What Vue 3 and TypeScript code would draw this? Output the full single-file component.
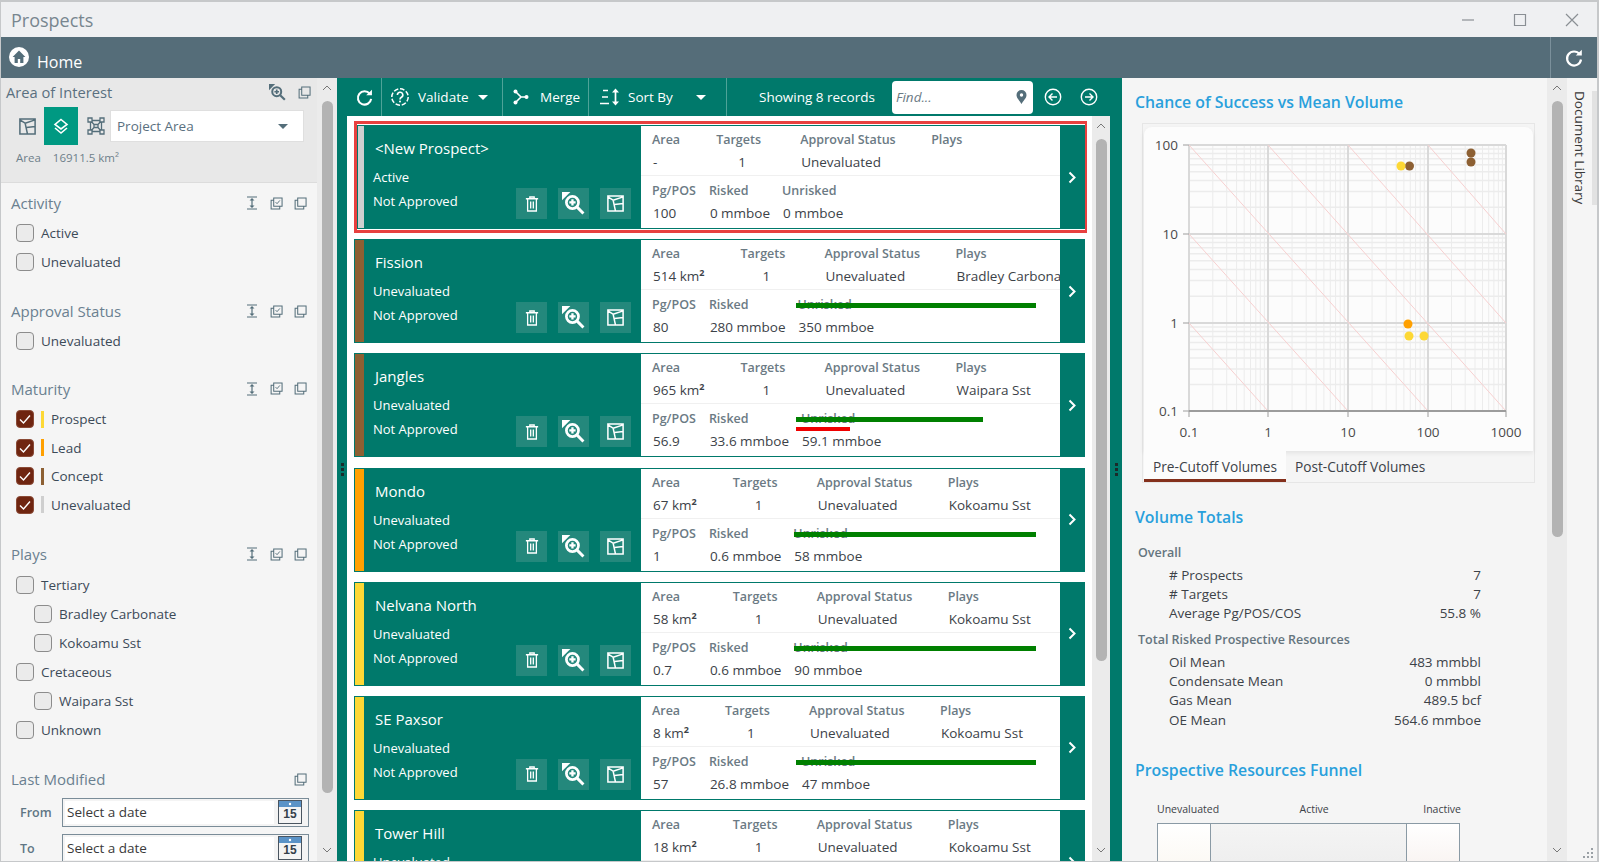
<template>
  <div class="window">
    <svg class="defs" width="0" height="0">
      <symbol id="i-refresh" viewBox="0 0 20 20">
        <path d="M15.6 6.2A7 7 0 1 0 17 11.5" fill="none" stroke="currentColor" stroke-width="2.2" />
        <path d="M11.8 7.6h6V1.8z" fill="currentColor" />
      </symbol>
      <symbol id="i-map" viewBox="0 0 20 20">
        <path d="M2 2h16v16H2zM2 3l5.5 3.5L10 18M7.5 6.5 18 3M9 11l9-1" fill="none" stroke="currentColor" stroke-width="1.6" />
      </symbol>
      <symbol id="i-zoom" viewBox="0 0 22 22">
        <path d="M0 0h8L0 8z" fill="currentColor" />
        <circle cx="10" cy="10" r="5.8" fill="none" stroke="currentColor" stroke-width="2.6" />
        <path d="M7 10h6M10 7v6" stroke="currentColor" stroke-width="2.2" />
        <path d="m14.5 14.5 6 6" stroke="currentColor" stroke-width="2.8" />
      </symbol>
      <symbol id="i-trash" viewBox="0 0 16 18">
        <path d="M1 3h14M5.5 3V1h5v2M3 3v14h10V3M6.5 6v8M9.5 6v8" fill="none" stroke="currentColor" stroke-width="1.5" />
      </symbol>
      <symbol id="i-copy" viewBox="0 0 14 14">
        <path d="M4 1h9v9H4zM4 3.5H1.2v9.3h9.3V10" fill="none" stroke="currentColor" stroke-width="1.1" />
      </symbol>
      <symbol id="i-copycheck" viewBox="0 0 14 14">
        <path d="M4 1h9v9H4zM4 3.5H1.2v9.3h9.3V10" fill="none" stroke="currentColor" stroke-width="1.1" />
        <path d="m6 5.5 1.6 1.7 3-3.5" fill="none" stroke="currentColor" stroke-width="1" />
      </symbol>
      <symbol id="i-expand" viewBox="0 0 12 14">
        <path d="M1 1h10M1 13h10" stroke="currentColor" stroke-width="1.2" />
        <path d="M6 3v8" stroke="currentColor" stroke-width="1.2" />
        <path d="m3.5 4.5 2.5-2.5 2.5 2.5zM3.5 9.5 6 12l2.5-2.5z" fill="currentColor" />
      </symbol>
      <symbol id="i-cal" viewBox="0 0 24 24">
        <rect x="0.5" y="0.5" width="23" height="23" fill="#f4f4f4" stroke="#4a5560" />
        <rect x="1" y="1" width="22" height="6" fill="#5b93c7" />
        <circle cx="12" cy="4" r="1.2" fill="#fff" />
      </symbol>
    </svg>

    <div class="titlebar">
      <span class="title">Prospects</span>
      <div class="win-controls">
        <svg width="14" height="14" viewBox="0 0 14 14"><path d="M1 7h12" stroke="#8a8f94" stroke-width="1.2" /></svg>
        <svg width="14" height="14" viewBox="0 0 14 14"><path d="M1.5 1.5h11v11h-11z" fill="none" stroke="#8a8f94" stroke-width="1.2" /></svg>
        <svg width="14" height="14" viewBox="0 0 14 14"><path d="m1 1 12 12M13 1 1 13" stroke="#8a8f94" stroke-width="1.2" /></svg>
      </div>
    </div>

    <div class="homebar">
      <svg class="home-icon" width="20" height="20" viewBox="0 0 20 20">
        <circle cx="10" cy="10" r="10" fill="#fff" />
        <path d="M10 3.6 3.6 10h2v6h3.2v-4h2.4v4h3.2v-6h2z" fill="#546e7a" />
      </svg>
      <span class="home-label">Home</span>
      <div class="home-refresh">
        <svg width="20" height="20"><use href="#i-refresh" /></svg>
      </div>
    </div>

    <div class="body">
      <aside class="filters">
        <div class="filters-main">
          <div class="aoi">
            <div class="aoi-head">
              <span>Area of Interest</span>
              <svg class="aoi-zoom" width="17" height="17"><use href="#i-zoom" /></svg>
              <svg class="aoi-copy" width="13" height="13"><use href="#i-copy" /></svg>
            </div>
            <div class="aoi-row">
              <span class="aoi-btn"><svg width="19" height="19"><use href="#i-map" /></svg></span>
              <span class="aoi-btn active">
                <svg width="18" height="18" viewBox="0 0 18 18">
                  <path d="M9 2.5 15 7.5 9 12 3 7.5z" fill="none" stroke="#fff" stroke-width="1.6" />
                  <path d="M3 11 9 16l6-5" fill="none" stroke="#fff" stroke-width="1.6" />
                </svg>
              </span>
              <span class="aoi-btn">
                <svg width="18" height="18" viewBox="0 0 18 18">
                  <path d="M3.5 3.5h11v11h-11zM3.5 3.5l3.5 4M14.5 3.5 11 7.5M3.5 14.5 7 10.5M14.5 14.5 11 10.5M7 7.5h4v3H7z" fill="none" stroke="currentColor" stroke-width="1.3" />
                  <path d="M1 1h4v4H1zM13 1h4v4h-4zM1 13h4v4H1zM13 13h4v4h-4z" fill="#e8e8e8" stroke="currentColor" stroke-width="1.3" />
                </svg>
              </span>
              <div class="aoi-select">
                <span>Project Area</span>
                <i class="caret dark"></i>
              </div>
            </div>
            <div class="aoi-area"><span>Area</span><span>16911.5 km²</span></div>
          </div>

          <section v-for="group in filterGroups" :key="group.title" class="filter-group">
            <div class="group-head">
              <span>{{ group.title }}</span>
              <div class="group-icons">
                <svg width="12" height="14"><use href="#i-expand" /></svg>
                <svg width="13" height="13"><use href="#i-copycheck" /></svg>
                <svg width="13" height="13"><use href="#i-copy" /></svg>
              </div>
            </div>
            <label v-for="item in group.items" :key="item.label" class="check" :class="{ indent: item.indent }">
              <span class="box" :class="{ checked: item.checked }">
                <svg v-if="item.checked" width="14" height="14" viewBox="0 0 14 14"><path d="m2 7.5 3.5 3.5L12 3.5" fill="none" stroke="#fff" stroke-width="1.4" /></svg>
              </span>
              <span v-if="item.color" class="swatch" :style="{ background: item.color }"></span>
              <span>{{ item.label }}</span>
            </label>
          </section>

          <section class="filter-group">
            <div class="group-head">
              <span>Last Modified</span>
              <div class="group-icons">
                <svg width="13" height="13"><use href="#i-copy" /></svg>
              </div>
            </div>
            <div v-for="d in ['From', 'To']" :key="d" class="date-row">
              <span class="date-label">{{ d }}</span>
              <div class="date-input">
                <span class="date-text">Select a date</span>
                <span class="cal">
                  <svg width="24" height="24"><use href="#i-cal" /></svg>
                  <span class="cal-day">15</span>
                </span>
              </div>
            </div>
          </section>
        </div>
        <div class="scrollbar">
          <svg class="arrow" width="10" height="6" viewBox="0 0 10 6"><path d="m1 5 4-4 4 4" fill="none" stroke="#777" /></svg>
          <div class="thumb thumb-left"></div>
          <div class="spring"></div>
          <svg class="arrow" width="10" height="6" viewBox="0 0 10 6"><path d="m1 1 4 4 4-4" fill="none" stroke="#777" /></svg>
        </div>
      </aside>

      <div class="center">
        <div class="splitter"><i></i><i></i><i></i></div>
        <div class="center-main">
          <div class="toolbar">
            <div class="tb tb-refresh"><svg width="19" height="19"><use href="#i-refresh" /></svg></div>
            <div class="tb tb-validate">
              <svg width="20" height="20" viewBox="0 0 20 20">
                <circle cx="10" cy="10" r="8.2" fill="none" stroke="#fff" stroke-width="1.5" stroke-dasharray="4.6 1.8" />
                <path d="M7.4 8a2.7 2.7 0 1 1 4 2.3c-1 .6-1.4 1-1.4 2.1" fill="none" stroke="#fff" stroke-width="1.6" />
                <circle cx="10" cy="14.6" r="1" fill="#fff" />
              </svg>
              <span>Validate</span>
              <i class="caret"></i>
            </div>
            <div class="tb tb-merge">
              <svg width="16" height="16" viewBox="0 0 16 16">
                <path d="M2.5 2.5 8 8l-5.5 5.5M8 8h5" fill="none" stroke="#fff" stroke-width="1.6" />
                <circle cx="2.5" cy="2.5" r="2" fill="#fff" /><circle cx="2.5" cy="13.5" r="2" fill="#fff" /><circle cx="13.5" cy="8" r="2" fill="#fff" />
              </svg>
              <span>Merge</span>
            </div>
            <div class="tb tb-sort">
              <svg width="21" height="18" viewBox="0 0 21 18">
                <path d="M4 2.5h5M3 9h6M1 15.5h9" stroke="#fff" stroke-width="1.7" />
                <path d="M16.5 3v12" stroke="#fff" stroke-width="1.7" />
                <path d="m13 4.5 3.5-4 3.5 4zM13 13.5l3.5 4 3.5-4z" fill="#fff" />
              </svg>
              <span>Sort By</span>
              <i class="caret"></i>
            </div>
            <div class="tb-right">
              <span class="records">Showing 8 records</span>
              <div class="find">
                <span>Find...</span>
                <svg width="11" height="14" viewBox="0 0 11 14"><path d="M5.5 0a5 5 0 0 1 5 5c0 3.3-3.5 6-5 9-1.5-3-5-5.7-5-9a5 5 0 0 1 5-5z" fill="#546e7a" /><circle cx="5.5" cy="5" r="1.7" fill="#fff" /></svg>
              </div>
              <svg class="nav-btn" width="18" height="18" viewBox="0 0 18 18"><circle cx="9" cy="9" r="7.7" fill="none" stroke="#fff" stroke-width="1.4" /><path d="M13 9H5.5M8.5 5.5 5 9l3.5 3.5" fill="none" stroke="#fff" stroke-width="1.4" /></svg>
              <svg class="nav-btn" width="18" height="18" viewBox="0 0 18 18"><circle cx="9" cy="9" r="7.7" fill="none" stroke="#fff" stroke-width="1.4" /><path d="M5 9h7.5M9.5 5.5 13 9l-3.5 3.5" fill="none" stroke="#fff" stroke-width="1.4" /></svg>
            </div>
          </div>

          <div class="list-wrap">
            <div class="list">
              <div v-for="p in prospects" :key="p.name" class="card-slot" :class="{ selected: p.selected }">
                <article class="card">
                  <div class="strip" :style="{ background: p.color }"></div>
                  <div class="card-left">
                    <div class="card-text">
                      <div class="card-name">{{ p.name }}</div>
                      <div class="card-status">{{ p.activity }}</div>
                      <div class="card-status">Not Approved</div>
                    </div>
                    <div class="card-actions">
                      <span class="act"><svg width="14" height="16"><use href="#i-trash" /></svg></span>
                      <span class="act"><svg width="23" height="23"><use href="#i-zoom" /></svg></span>
                      <span class="act"><svg width="19" height="19"><use href="#i-map" /></svg></span>
                    </div>
                  </div>
                  <div class="card-body">
                    <div class="card-row top">
                      <div class="col col-area"><b>Area</b><span>{{ p.area }}<sup v-if="p.area !== '-'">2</sup></span></div>
                      <div class="col col-targets"><b>Targets</b><span>1</span></div>
                      <div class="col col-approval"><b>Approval Status</b><span>Unevaluated</span></div>
                      <div class="col col-plays"><b>Plays</b><span>{{ p.plays }}</span></div>
                    </div>
                    <div class="card-row bottom">
                      <div class="col col-pg"><b>Pg/POS</b><span>{{ p.pg }}</span></div>
                      <div class="col col-risked"><b>Risked</b><span>{{ p.risked }}</span></div>
                      <div class="col"><b>Unrisked</b><span>{{ p.unrisked }}</span></div>
                      <i v-if="p.green" class="bar green" :style="{ left: p.barLeft + 'px', width: p.green + 'px' }"></i>
                      <i v-if="p.red" class="bar red" :style="{ left: p.barLeft + 'px', width: p.red + 'px' }"></i>
                    </div>
                  </div>
                  <div class="card-chevron">
                    <svg width="9" height="13" viewBox="0 0 9 13"><path d="m1.5 1.5 5 5-5 5" fill="none" stroke="#fff" stroke-width="2" /></svg>
                  </div>
                </article>
              </div>
            </div>
            <div class="scrollbar list-scroll">
              <svg class="arrow" width="10" height="6" viewBox="0 0 10 6"><path d="m1 5 4-4 4 4" fill="none" stroke="#777" /></svg>
              <div class="thumb thumb-list"></div>
              <div class="spring"></div>
              <svg class="arrow" width="10" height="6" viewBox="0 0 10 6"><path d="m1 1 4 4 4-4" fill="none" stroke="#777" /></svg>
            </div>
          </div>
        </div>
        <div class="splitter right"><i></i><i></i><i></i></div>
      </div>

      <div class="summary">
        <div class="summary-main">
          <h2 class="chart-title">Chance of Success vs Mean Volume</h2>
          <div class="chart-box">
            <div class="chart-card">
              <svg width="388" height="324" viewBox="0 0 388 324">
                <line v-for="x in minorX" :key="'mx' + x" :x1="x" :x2="x" y1="18" y2="284" stroke="#ececec" />
                <line v-for="y in minorY" :key="'my' + y" x1="45" x2="362" :y1="y" :y2="y" stroke="#ececec" stroke-width="1.5" />
                <line v-for="x in decadeX" :key="'dx' + x" :x1="x" :x2="x" y1="18" y2="284" stroke="#d9d9d9" stroke-width="2" />
                <line v-for="y in decadeY" :key="'dy' + y" x1="45" x2="362" :y1="y" :y2="y" stroke="#d9d9d9" stroke-width="2" />
                <line v-for="(d, i) in diagonals" :key="'d' + i" :x1="d[0]" :y1="d[1]" :x2="d[2]" :y2="d[3]" stroke="#f7d0d0" />
                <line x1="45" x2="362" y1="284" y2="284" stroke="#9c9c9c" stroke-width="2" />
                <line v-for="x in decadeX" :key="'tx' + x" :x1="x" :x2="x" y1="284" y2="290" stroke="#9c9c9c" />
                <line v-for="y in decadeY" :key="'ty' + y" x1="39" x2="45" :y1="y" :y2="y" stroke="#9c9c9c" />
                <text v-for="(t, i) in xLabels" :key="'xl' + t" class="axis" text-anchor="middle" :x="decadeX[i]" y="310">{{ t }}</text>
                <text v-for="(t, i) in yLabels" :key="'yl' + t" class="axis" text-anchor="end" x="34" :y="decadeY[i] + 5">{{ t }}</text>
                <circle v-for="(c, i) in dots" :key="'c' + i" :cx="c.x" :cy="c.y" r="4.5" :fill="c.fill" />
              </svg>
            </div>
            <div class="tabs">
              <span class="tab active">Pre-Cutoff Volumes</span>
              <span class="tab">Post-Cutoff Volumes</span>
            </div>
          </div>

          <h2 class="vol-title">Volume Totals</h2>
          <div class="totals">
            <template v-for="block in totals" :key="block.title">
              <div class="totals-head">{{ block.title }}</div>
              <div v-for="r in block.rows" :key="r[0]" class="totals-row"><span>{{ r[0] }}</span><span>{{ r[1] }}</span></div>
            </template>
          </div>

          <h2 class="funnel-title">Prospective Resources Funnel</h2>
          <div class="funnel">
            <div class="funnel-labels"><span>Unevaluated</span><span>Active</span><span>Inactive</span></div>
            <div class="funnel-boxes"><i class="fb fb1"></i><i class="fb fb2"></i><i class="fb fb3"></i></div>
          </div>
        </div>
        <div class="scrollbar">
          <svg class="arrow" width="10" height="6" viewBox="0 0 10 6"><path d="m1 5 4-4 4 4" fill="none" stroke="#777" /></svg>
          <div class="thumb thumb-right"></div>
          <div class="spring"></div>
          <svg class="arrow" width="10" height="6" viewBox="0 0 10 6"><path d="m1 1 4 4 4-4" fill="none" stroke="#777" /></svg>
        </div>
      </div>

      <div class="doc-strip">
        <span class="doc-tab">Document Library</span>
        <svg class="grip" width="11" height="11" viewBox="0 0 11 11" fill="#9aa0a5">
          <rect x="8" y="0" width="2" height="2" /><rect x="4" y="4" width="2" height="2" /><rect x="8" y="4" width="2" height="2" /><rect x="0" y="8" width="2" height="2" /><rect x="4" y="8" width="2" height="2" /><rect x="8" y="8" width="2" height="2" />
        </svg>
      </div>
    </div>
  </div>
</template>

<script setup lang="ts">
interface FilterItem {
  label: string
  checked?: boolean
  indent?: boolean
  color?: string
}

interface FilterGroup {
  title: string
  items: FilterItem[]
}

interface Prospect {
  name: string
  color: string
  activity: string
  area: string
  plays: string
  pg: string
  risked: string
  unrisked: string
  barLeft?: number
  green?: number
  red?: number
  selected?: boolean
}

const YELLOW = '#fdd835'
const ORANGE = '#ffa000'
const BROWN = '#8d6033'
const GREY = '#cfcfcf'

const filterGroups: FilterGroup[] = [
  { title: 'Activity', items: [{ label: 'Active' }, { label: 'Unevaluated' }] },
  { title: 'Approval Status', items: [{ label: 'Unevaluated' }] },
  {
    title: 'Maturity',
    items: [
      { label: 'Prospect', checked: true, color: YELLOW },
      { label: 'Lead', checked: true, color: ORANGE },
      { label: 'Concept', checked: true, color: BROWN },
      { label: 'Unevaluated', checked: true, color: GREY }
    ]
  },
  {
    title: 'Plays',
    items: [
      { label: 'Tertiary' },
      { label: 'Bradley Carbonate', indent: true },
      { label: 'Kokoamu Sst', indent: true },
      { label: 'Cretaceous' },
      { label: 'Waipara Sst', indent: true },
      { label: 'Unknown' }
    ]
  }
]

const prospects: Prospect[] = [
  { name: '<New Prospect>', color: GREY, activity: 'Active', area: '-', plays: '', pg: '100', risked: '0 mmboe', unrisked: '0 mmboe', selected: true },
  { name: 'Fission', color: BROWN, activity: 'Unevaluated', area: '514 km', plays: 'Bradley Carbonate', pg: '80', risked: '280 mmboe', unrisked: '350 mmboe', barLeft: 155, green: 240 },
  { name: 'Jangles', color: BROWN, activity: 'Unevaluated', area: '965 km', plays: 'Waipara Sst', pg: '56.9', risked: '33.6 mmboe', unrisked: '59.1 mmboe', barLeft: 155, green: 187, red: 54 },
  { name: 'Mondo', color: ORANGE, activity: 'Unevaluated', area: '67 km', plays: 'Kokoamu Sst', pg: '1', risked: '0.6 mmboe', unrisked: '58 mmboe', barLeft: 153, green: 242 },
  { name: 'Nelvana North', color: YELLOW, activity: 'Unevaluated', area: '58 km', plays: 'Kokoamu Sst', pg: '0.7', risked: '0.6 mmboe', unrisked: '90 mmboe', barLeft: 153, green: 242 },
  { name: 'SE Paxsor', color: YELLOW, activity: 'Unevaluated', area: '8 km', plays: 'Kokoamu Sst', pg: '57', risked: '26.8 mmboe', unrisked: '47 mmboe', barLeft: 155, green: 240 },
  { name: 'Tower Hill', color: YELLOW, activity: 'Unevaluated', area: '18 km', plays: 'Kokoamu Sst', pg: '18', risked: '8 mmboe', unrisked: '40 mmboe', barLeft: 155, green: 240 }
]

// chart space: 4 decades on x, 3 on y
const decadeX = [45, 124, 204, 284, 362]
const decadeY = [284, 196, 107, 18]
const xLabels = ['0.1', '1', '10', '100', '1000']
const yLabels = ['0.1', '1', '10', '100']

const minorX: number[] = []
const minorY: number[] = []
for (let i = 0; i < 4; i++) {
  for (let m = 2; m < 10; m++) {
    minorX.push(Math.round((decadeX[i] + (decadeX[i + 1] - decadeX[i]) * Math.log10(m)) * 10) / 10)
  }
}
for (let i = 0; i < 3; i++) {
  for (let m = 2; m < 10; m++) {
    minorY.push(Math.round((decadeY[i] + (decadeY[i + 1] - decadeY[i]) * Math.log10(m)) * 10) / 10)
  }
}

const diagonals = [
  [45, 196, 124, 284],
  [45, 107, 204, 284],
  [45, 18, 284, 284],
  [124, 18, 362, 284],
  [204, 18, 362, 196],
  [284, 18, 362, 107]
]

const dots = [
  { x: 265.5, y: 39, fill: BROWN },
  { x: 257, y: 39, fill: YELLOW },
  { x: 327, y: 26, fill: BROWN },
  { x: 327, y: 35, fill: BROWN },
  { x: 264, y: 197, fill: ORANGE },
  { x: 265, y: 209, fill: YELLOW },
  { x: 280, y: 209, fill: YELLOW }
]

const totals = [
  {
    title: 'Overall',
    rows: [
      ['# Prospects', '7'],
      ['# Targets', '7'],
      ['Average Pg/POS/COS', '55.8 %']
    ]
  },
  {
    title: 'Total Risked Prospective Resources',
    rows: [
      ['Oil Mean', '483 mmbbl'],
      ['Condensate Mean', '0 mmbbl'],
      ['Gas Mean', '489.5 bcf'],
      ['OE Mean', '564.6 mmboe']
    ]
  }
]
</script>

<style>
html,
body {
  margin: 0;
  overflow: hidden;
  background: #fff;
}
</style>

<style scoped>
.window {
  width: 1599px;
  height: 862px;
  box-sizing: border-box;
  border: 1px solid #c6c8ca;
  border-right-width: 2px;
  border-top-width: 2px;
  display: flex;
  flex-direction: column;
  font-family: "Open Sans", "Noto Sans", sans-serif;
  font-size: 13.5px;
  color: #3c4850;
  overflow: hidden;
  background: #f5f5f5;
}
.defs {
  position: absolute;
}
.titlebar {
  height: 35px;
  flex: none;
  background: #eff0f2;
  display: flex;
  align-items: center;
  padding-left: 10px;
}
.title {
  font-size: 18px;
  color: #78868f;
}
.win-controls {
  margin-left: auto;
  display: flex;
  gap: 38px;
  padding-right: 18px;
}
.homebar {
  height: 41px;
  flex: none;
  background: #556d79;
  display: flex;
  align-items: center;
  color: #fff;
  padding-left: 8px;
}
.home-icon {
  margin-bottom: 2px;
}
.home-label {
  font-size: 16px;
  margin-left: 8px;
  margin-top: 8px;
}
.home-refresh {
  margin-left: auto;
  width: 47px;
  height: 100%;
  border-left: 1px solid #7b909b;
  box-sizing: border-box;
  display: flex;
  align-items: center;
  justify-content: center;
}
.body {
  flex: 1;
  min-height: 0;
  display: flex;
}
.filters {
  width: 336px;
  flex: none;
  display: flex;
}
.filters-main {
  width: 316px;
  flex: none;
}
.aoi {
  height: 105px;
  box-sizing: border-box;
  background: #e8e8e8;
  border-bottom: 1px solid #dcdcdc;
}
.aoi-head {
  height: 28px;
  display: flex;
  align-items: center;
  padding-left: 5px;
  font-size: 14.7px;
  color: #5a7080;
}
.aoi-zoom {
  margin-left: auto;
  color: #546e7a;
}
.aoi-copy {
  margin-left: 12px;
  margin-right: 6px;
  color: #546e7a;
}
.aoi-row {
  display: flex;
  align-items: center;
  margin-top: 1px;
  padding-left: 15px;
  color: #546e7a;
}
.aoi-btn {
  width: 22px;
  height: 38px;
  display: flex;
  align-items: center;
  justify-content: center;
}
.aoi-btn.active {
  width: 34px;
  margin: 0 7px 0 6px;
  background: #009982;
}
.aoi-select {
  width: 194px;
  height: 32px;
  box-sizing: border-box;
  margin-left: 3px;
  background: #fff;
  border: 1px solid #dfdfdf;
  display: flex;
  align-items: center;
  justify-content: space-between;
  padding: 0 15px 0 6px;
  color: #5a7080;
}
.aoi-area {
  display: flex;
  gap: 12px;
  padding: 5px 0 0 15px;
  font-size: 11.5px;
  color: #6e7f8a;
}
.caret {
  width: 0;
  height: 0;
  border-left: 5px solid transparent;
  border-right: 5px solid transparent;
  border-top: 5px solid #fff;
  display: inline-block;
}
.caret.dark {
  border-top-color: #546e7a;
}
.filter-group {
  padding: 6px 0 0 0;
  margin-bottom: 15px;
}
.filter-group:nth-of-type(2) {
  margin-bottom: 13px;
}
.filter-group:nth-of-type(4) .check {
  height: 29px;
}
.group-head {
  height: 28px;
  margin-bottom: 2px;
  display: flex;
  align-items: center;
  padding: 0 10px 0 10px;
  font-size: 15px;
  color: #6a8090;
}
.group-icons {
  margin-left: auto;
  display: flex;
  gap: 11.5px;
  color: #546e7a;
  align-items: center;
}
.check {
  height: 28.6px;
  display: flex;
  align-items: center;
  padding-left: 15px;
  color: #3c4a58;
}
.check.indent {
  padding-left: 33px;
}
.box {
  width: 18px;
  height: 18px;
  box-sizing: border-box;
  border: 1.5px solid #8c8c8c;
  border-radius: 4px;
  background: #ebebeb;
  margin-right: 7px;
  display: flex;
  align-items: center;
  justify-content: center;
}
.box.checked {
  background: #6f2510;
  border-color: #8a4a36;
}
.swatch {
  width: 3px;
  height: 17px;
  margin-right: 7px;
  margin-left: 0;
}
.date-row {
  display: flex;
  align-items: center;
  height: 28px;
  margin: 5px 0 8px;
}
.date-label {
  width: 61px;
  box-sizing: border-box;
  padding-left: 19px;
  font-weight: 600;
  font-size: 12.5px;
  color: #5f7684;
}
.date-input {
  width: 247px;
  height: 29px;
  box-sizing: border-box;
  border: 1px solid #7a8c98;
  display: flex;
  align-items: center;
  background: #f4f4f4;
  padding: 2px 6px 2px 2px;
}
.date-text {
  flex: 1;
  background: #fff;
  height: 100%;
  display: flex;
  align-items: center;
  padding-left: 2px;
  color: #3a3a3a;
}
.cal {
  position: relative;
  width: 24px;
  height: 24px;
  margin-left: 4px;
}
.cal-day {
  position: absolute;
  left: 0;
  right: 0;
  top: 7px;
  text-align: center;
  font: 700 12px "Liberation Sans", sans-serif;
  color: #34404a;
}
.scrollbar {
  width: 20px;
  flex: none;
  background: #ebebeb;
  display: flex;
  flex-direction: column;
  align-items: center;
  padding: 7px 0 8px;
  box-sizing: border-box;
}
.arrow {
  flex: none;
}
.thumb {
  width: 11px;
  margin-top: 10px;
  border-radius: 6px;
  background: #b3b3b3;
  flex: none;
}
.spring {
  flex: 1;
}
.thumb-left {
  height: 692px;
}
.thumb-right {
  height: 436px;
}
.thumb-list {
  height: 522px;
}
.center {
  width: 785px;
  flex: none;
  display: flex;
  background: #00796b;
}
.splitter {
  width: 10px;
  flex: none;
  display: flex;
  flex-direction: column;
  align-items: center;
  justify-content: center;
  gap: 2px;
}
.splitter.right {
  width: 12px;
}
.splitter i {
  width: 3px;
  height: 3px;
  background: #1a2b2a;
}
.center-main {
  flex: 1;
  min-width: 0;
  display: flex;
  flex-direction: column;
}
.toolbar {
  height: 38px;
  flex: none;
  display: flex;
  color: #fff;
}
.tb {
  display: flex;
  flex: none;
  align-items: center;
  border-right: 1px solid #4ea398;
  box-sizing: border-box;
  height: 100%;
}
.tb-refresh {
  width: 35px;
  padding-left: 8px;
}
.tb-validate {
  width: 121px;
  padding-left: 8px;
}
.tb-validate span {
  margin: 0 9px 0 8px;
}
.tb-merge {
  width: 86px;
  padding-left: 10px;
}
.tb-merge span {
  margin-left: 11px;
}
.tb-sort {
  width: 138px;
  padding-left: 10px;
}
.tb-sort span {
  margin: -1px 22px 0 8px;
  width: 46px;
  white-space: nowrap;
}
.tb-right {
  display: flex;
  flex: none;
  align-items: center;
  padding-left: 32px;
}
.records {
  width: 133px;
  white-space: nowrap;
}
.find {
  width: 141px;
  height: 33px;
  background: #fff;
  border-radius: 4px;
  box-sizing: border-box;
  display: flex;
  align-items: center;
  justify-content: space-between;
  padding: 0 6px 0 4px;
  font-style: italic;
  color: #6a7a84;
  font-size: 13.5px;
  margin-right: 11px;
}
.nav-btn {
  flex: none;
}
.nav-btn + .nav-btn {
  margin-left: 18px;
}
.list-wrap {
  flex: 1;
  min-height: 0;
  display: flex;
  background: #fff;
}
.list {
  flex: 1;
  min-width: 0;
  padding: 9px 2px 0 7px;
  overflow: hidden;
}
.card-slot {
  height: 104px;
  margin-bottom: 10.2px;
}
.card-slot.selected {
  margin: -1px 0 9.2px 3px;
  padding: 1px 0;
  outline: 3px solid #e8403f;
}
.card {
  height: 104px;
  box-sizing: border-box;
  border: 1px solid #00796b;
  display: flex;
  background: #fff;
}
.strip {
  width: 9px;
  flex: none;
}
.selected .strip {
  width: 6px;
}
.card-left {
  width: 268px;
  flex: none;
  background: #00796b;
  color: #fff;
  padding-left: 9px;
  display: flex;
}
.card-text {
  flex: 1;
  min-width: 0;
}
.card-name {
  font-size: 15px;
  line-height: 24px;
  margin: 10px 0 0 2px;
}
.card-status {
  line-height: 24px;
  font-size: 13px;
}
.card-status:nth-child(2) {
  margin-top: 5px;
}
.card-actions {
  display: flex;
  gap: 11px;
  align-self: flex-end;
  padding: 0 10px 9px 0;
}
.act {
  width: 31px;
  height: 31px;
  background: #24887c;
  display: flex;
  align-items: center;
  justify-content: center;
}
.card-body {
  flex: 1;
  min-width: 0;
  display: flex;
  flex-direction: column;
}
.card-row {
  display: flex;
  padding-left: 11px;
  position: relative;
}
.card-row.top {
  height: 50px;
  box-sizing: border-box;
  border-bottom: 1px solid #f0f0f0;
  padding-top: 3px;
}
.card-row.bottom {
  padding-top: 4px;
}
.col {
  display: flex;
  flex-direction: column;
  flex: none;
}
.col b {
  font-weight: 600;
  font-size: 12.5px;
  color: #6b7a84;
  line-height: 22px;
}
.col span {
  line-height: 23px;
  padding-left: 1px;
  white-space: nowrap;
  color: #3c4248;
  min-height: 23px;
}
.col sup {
  font-size: 9px;
  line-height: 0;
  font-weight: 700;
}
.col-area {
  padding-right: 36px;
}
.col-targets {
  width: 84px;
}
.col-targets span {
  padding-left: 22px;
}
.col-approval {
  width: 131px;
}
.col-plays {
  flex: 1;
  min-width: 0;
  overflow: hidden;
}
.col-pg {
  padding-right: 13px;
}
.col-risked {
  padding-right: 12px;
}
.bar {
  position: absolute;
  height: 5px;
  top: 13px;
}
.bar.green {
  background: #008000;
}
.bar.red {
  background: #f00000;
  height: 4px;
  top: 23px;
}
.card-chevron {
  width: 24px;
  flex: none;
  background: #00796b;
  display: flex;
  align-items: center;
  justify-content: center;
}
.list-scroll {
  width: 18px;
  margin-left: 5px;
}
.summary {
  width: 445px;
  flex: none;
  display: flex;
}
.summary-main {
  flex: 1;
  min-width: 0;
  padding-left: 13px;
  overflow: hidden;
}
h2 {
  margin: 0;
  font-weight: 600;
  font-size: 15.8px;
  color: #29a0dc;
  line-height: 24px;
}
.chart-title {
  margin-top: 12px;
}
.chart-box {
  width: 393px;
  height: 360px;
  box-sizing: border-box;
  margin: 9px 0 0 7px;
  border: 1px solid #e6e6e6;
  padding: 3px 1px 0;
}
.chart-card {
  height: 324px;
  background: #fcfcfc;
  border-radius: 8px 8px 0 0;
  box-shadow: 0 2px 5px rgba(0, 0, 0, 0.08);
}
.chart-card svg {
  display: block;
}
.axis {
  font-size: 13.5px;
  fill: #4a4a4a;
}
.tabs {
  display: flex;
  height: 31px;
  position: relative;
}
.tab {
  padding: 6px 9px 0 9px;
  line-height: 20px;
  font-size: 13.7px;
  color: #3c4248;
  box-sizing: border-box;
  white-space: nowrap;
}
.tab.active {
  background: #fcfcfc;
  border-bottom: 3px solid #84301c;
}
.vol-title {
  margin-top: 22px;
}
.totals {
  width: 343px;
  margin: 14px 0 0 3px;
}
.totals-head {
  font-weight: 600;
  font-size: 12.5px;
  color: #64747e;
  line-height: 20px;
  margin-top: 7px;
  margin-bottom: 2.5px;
}
.totals-row {
  display: flex;
  justify-content: space-between;
  line-height: 19.3px;
  padding-left: 31px;
  color: #3c4248;
}
.funnel-title {
  margin-top: 28px;
}
.funnel {
  margin: 19px 0 0 22px;
}
.funnel-labels {
  width: 304px;
  display: flex;
  justify-content: space-between;
  font-size: 10.5px;
  color: #3c4248;
  line-height: 16px;
}
.funnel-labels span:nth-child(2) {
  margin-right: 14px;
}
.funnel-boxes {
  display: flex;
  margin-top: 6px;
  height: 60px;
}
.fb {
  box-sizing: border-box;
  border: 1px solid #8a9aa5;
}
.fb1 {
  width: 54px;
  background: linear-gradient(#fff, #faf6ef);
}
.fb2 {
  width: 197px;
  margin-left: -1px;
  background: linear-gradient(#f4f4f4, #ececec);
}
.fb3 {
  width: 54px;
  margin-left: -1px;
  background: linear-gradient(#fff, #f6efec);
}
.doc-strip {
  flex: 1;
  background: #f5f5f5;
  position: relative;
}
.doc-tab {
  display: block;
  writing-mode: vertical-rl;
  height: 114px;
  width: 30px;
  box-sizing: border-box;
  margin-top: 13px;
  padding: 0 4px;
  font-size: 13.5px;
  line-height: 17px;
  white-space: nowrap;
  border-right: 5px solid #e2e2e2;
  color: #3a3a3a;
}
.grip {
  position: absolute;
  right: 3px;
  bottom: 2px;
}
</style>
